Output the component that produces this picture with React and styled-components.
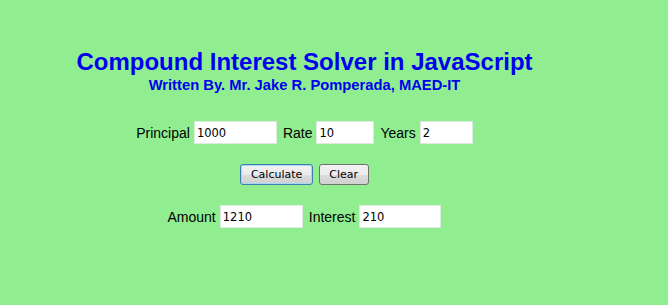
import React, { useState } from "react";
import styled, { createGlobalStyle } from "styled-components";

const GlobalStyle = createGlobalStyle`
  html, body {
    margin: 0;
    padding: 0;
    background: #90ee90;
  }
`;

const Page = styled.div`
  width: 609px;
  padding-top: 48px;
  text-align: center;
  font-family: "Liberation Sans", Arial, sans-serif;
  color: #000;
`;

const Title = styled.h1`
  margin: 0;
  font-size: 24px;
  font-weight: bold;
  color: #0000ee;
  line-height: 28px;
`;

const Subtitle = styled.h3`
  margin: 0;
  font-size: 14.75px;
  font-weight: bold;
  color: #0000ee;
  line-height: 18px;
`;

const Row = styled.div`
  display: flex;
  justify-content: center;
  align-items: center;
  gap: ${(p) => p.$gap || 4}px;
  margin-top: ${(p) => p.$top}px;
  font-size: 14px;
`;

const Label = styled.span`
  margin-left: ${(p) => (p.$first ? 0 : 2)}px;
`;

const Field = styled.input`
  box-sizing: border-box;
  width: ${(p) => p.$w}px;
  height: 23px;
  padding: 1px 2px 0;
  border: 1px solid #dfeadf;
  background: #fff;
  font-family: "DejaVu Sans", Tahoma, sans-serif;
  font-size: 11.5px;
  color: #000;
  outline: none;
`;

const Button = styled.button`
  box-sizing: border-box;
  height: 21px;
  padding: 0 9.5px;
  border: 1px solid ${(p) => (p.$focus ? "#3c7fb1" : "#707070")};
  border-radius: 3px;
  background: linear-gradient(#f2f2f2 0%, #ebebeb 50%, #dddddd 51%, #cfcfcf 100%);
  box-shadow: ${(p) => (p.$focus ? "inset 0 0 0 1px #a8d8f0" : "none")};
  font-family: "DejaVu Sans", Tahoma, sans-serif;
  font-size: 11px;
  color: #000;
`;

export default function App() {
  const [principal, setPrincipal] = useState("1000");
  const [rate, setRate] = useState("10");
  const [years, setYears] = useState("2");
  const [amount, setAmount] = useState("1210");
  const [interest, setInterest] = useState("210");

  const calculate = () => {
    const a = Number(principal) * Math.pow(1 + Number(rate) / 100, Number(years));
    setAmount(String(Math.round(a * 100) / 100));
    setInterest(String(Math.round((a - Number(principal)) * 100) / 100));
  };

  const clear = () => {
    setPrincipal("");
    setRate("");
    setYears("");
    setAmount("");
    setInterest("");
  };

  return (
    <>
      <GlobalStyle />
      <Page>
        <Title>Compound Interest Solver in JavaScript</Title>
        <Subtitle>Written By. Mr. Jake R. Pomperada, MAED-IT</Subtitle>
        <Row $top={27}>
          <Label $first>Principal</Label>
          <Field $w={83} value={principal} onChange={(e) => setPrincipal(e.target.value)} />
          <Label>Rate</Label>
          <Field $w={58} value={rate} onChange={(e) => setRate(e.target.value)} />
          <Label>Years</Label>
          <Field $w={53} value={years} onChange={(e) => setYears(e.target.value)} />
        </Row>
        <Row $top={20} $gap={6}>
          <Button $focus onClick={calculate}>Calculate</Button>
          <Button onClick={clear}>Clear</Button>
        </Row>
        <Row $top={20}>
          <Label $first>Amount</Label>
          <Field $w={83} value={amount} readOnly />
          <Label>Interest</Label>
          <Field $w={82} value={interest} readOnly />
        </Row>
      </Page>
    </>
  );
}
